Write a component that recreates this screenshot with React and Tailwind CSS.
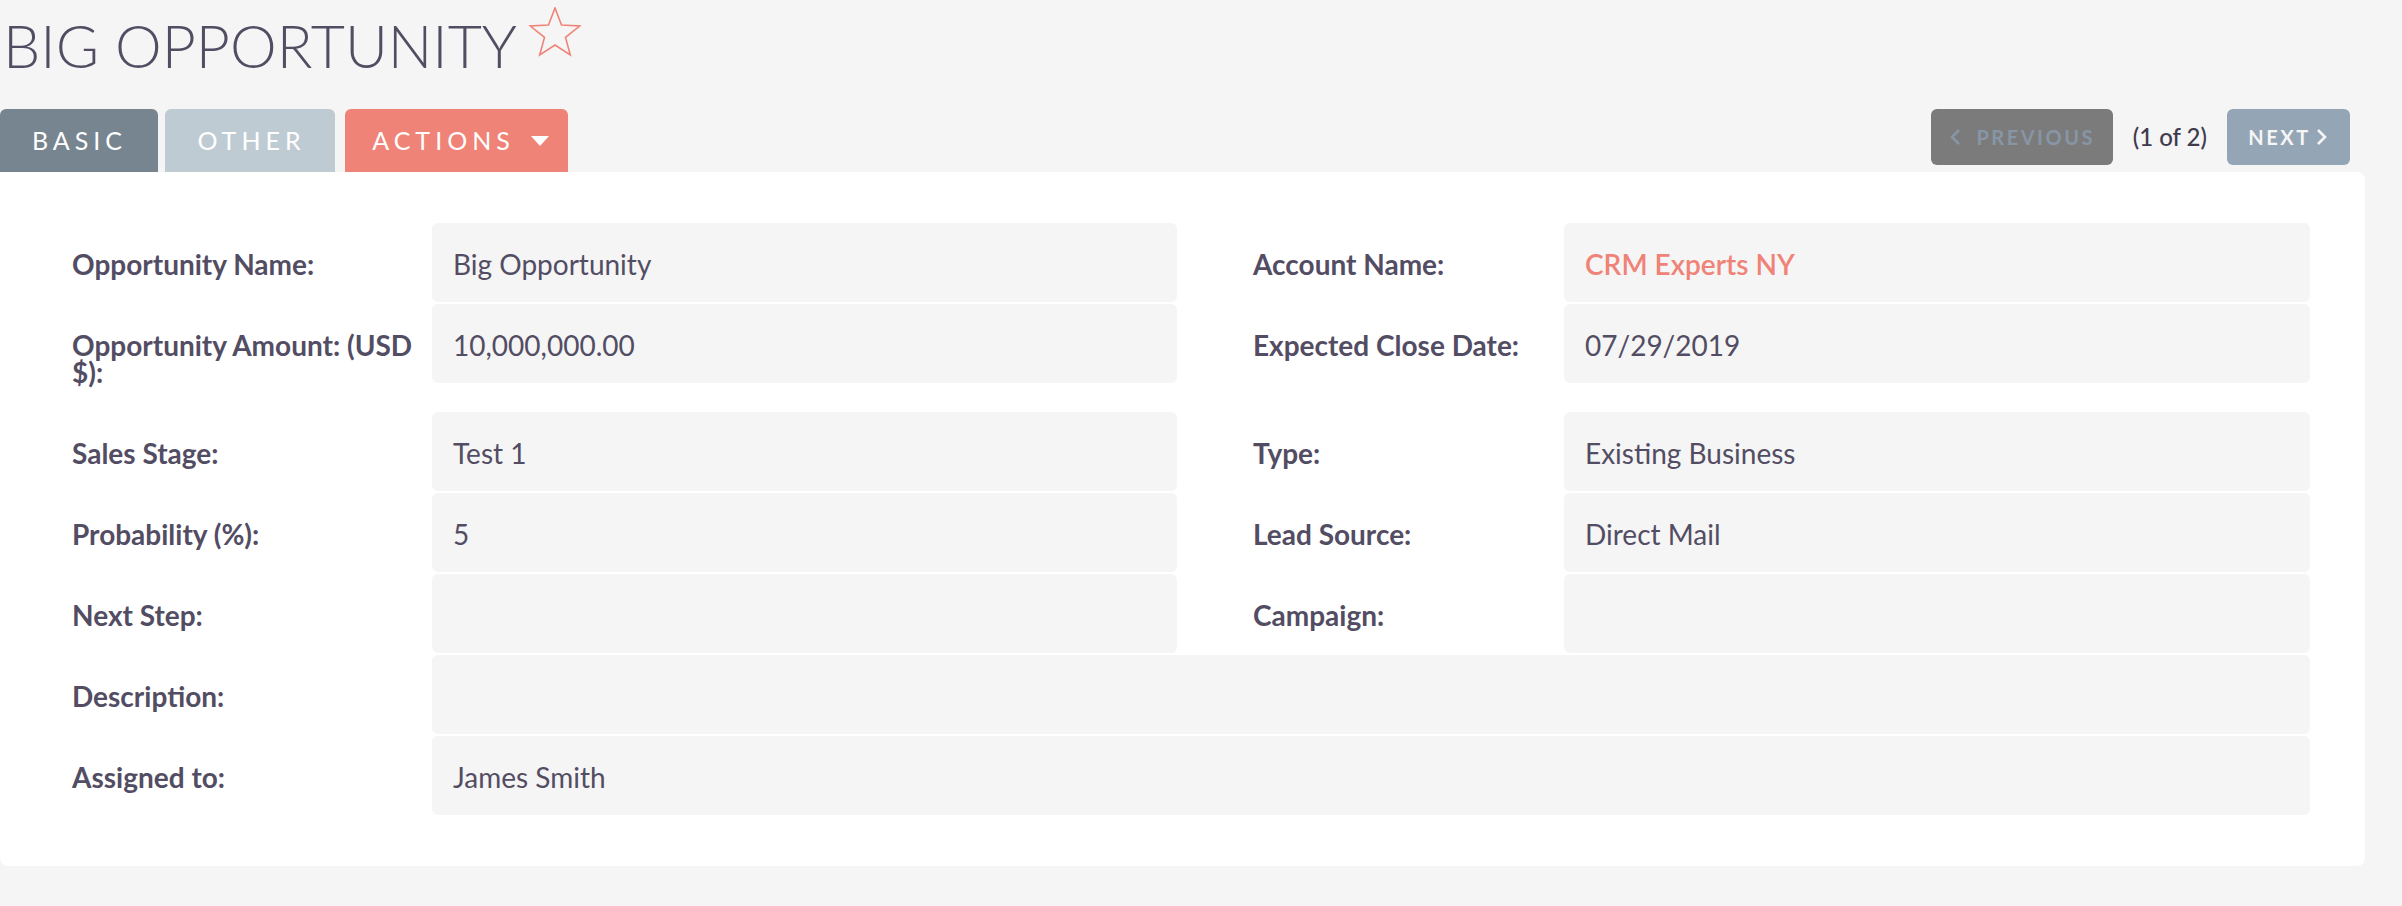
import React from 'react';

const pairRows = [
  { label: 'Opportunity Name:', value: 'Big Opportunity', rightLabel: 'Account Name:', rightValue: 'CRM Experts NY', link: true },
  { label: 'Opportunity Amount: (USD $):', value: '10,000,000.00', rightLabel: 'Expected Close Date:', rightValue: '07/29/2019' },
  { label: 'Sales Stage:', value: 'Test 1', rightLabel: 'Type:', rightValue: 'Existing Business' },
  { label: 'Probability (%):', value: '5', rightLabel: 'Lead Source:', rightValue: 'Direct Mail' },
  { label: 'Next Step:', value: '', rightLabel: 'Campaign:', rightValue: '' },
];

const wideRows = [
  { label: 'Description:', value: '' },
  { label: 'Assigned to:', value: 'James Smith' },
];

const Star = () => (
  <svg width="56" height="52" viewBox="0 0 56 52" className="ml-[10px] mt-[-9px] shrink-0">
    <polygon
      points="28,1 34.5,18.1 52.7,19 38.5,30.4 43.3,48 28,38 12.7,48 17.5,30.4 3.3,19 21.5,18.1"
      fill="none"
      stroke="#f08377"
      strokeWidth="1.6"
      strokeLinejoin="miter"
    />
  </svg>
);

const Label = ({ children, className = '' }) => (
  <div className={`pt-[28px] pb-[24px] pr-[8px] text-[28px] leading-[27px] font-bold text-[#534d64] ${className}`}>
    {children}
  </div>
);

const Value = ({ children, link, className = '' }) => (
  <div className={`h-[79px] rounded-[6px] bg-[#f5f5f5] pl-[21px] pt-[28px] text-[28px] leading-[26px] ${link ? 'text-[#f08377] font-semibold' : 'text-[#534d64]'} ${className}`}>
    {children}
  </div>
);

const App = () => {
  return (
    <div className="min-h-screen w-full bg-[#f5f5f5] font-[family-name:Lato,sans-serif]">
      <div className="flex items-start pl-[3px] pt-[16px]">
        <h1 className="text-[59px] leading-[60px] font-light tracking-[0px] text-[#534d64]">BIG OPPORTUNITY</h1>
        <Star />
      </div>

      <div className="mt-[33px] flex items-start justify-between pr-[52px]">
        <div className="flex items-start">
          <div className="flex h-[63px] w-[158px] items-center justify-center rounded-t-[6px] bg-[#778591] pl-[1px] text-[25px] tracking-[5px] text-white">
            BASIC
          </div>
          <div className="ml-[7px] flex h-[63px] w-[170px] items-center justify-center rounded-t-[6px] bg-[#bfcbd3] pl-[3px] text-[25px] tracking-[5px] text-white">
            OTHER
          </div>
          <div className="ml-[10px] flex h-[63px] w-[223px] items-center justify-center rounded-t-[6px] bg-[#f08377] pl-[8px] text-[25px] tracking-[5px] text-white">
            <span>ACTIONS</span>
            <span className="ml-[16px] h-0 w-0 border-x-[9px] border-t-[10px] border-x-transparent border-t-white" />
          </div>
        </div>

        <div className="flex items-center">
          <div className="flex h-[56px] w-[182px] items-center justify-center rounded-[6px] bg-[#7b7b7b] text-[20px] font-bold tracking-[2.5px] text-[#8796a6]">
            <svg width="14" height="18" viewBox="0 0 14 18" className="mr-[14px]">
              <polyline points="11,2 4,9 11,16" fill="none" stroke="#8796a6" strokeWidth="2.6" />
            </svg>
            <span>PREVIOUS</span>
          </div>
          <span className="mx-[20px] text-[24px] font-medium text-[#3f3b4d]">(1 of 2)</span>
          <div className="flex h-[56px] w-[123px] items-center justify-center rounded-[6px] bg-[#94a5b5] text-[20px] font-bold tracking-[2.5px] text-[#f5f5f5]">
            <span>NEXT</span>
            <svg width="14" height="18" viewBox="0 0 14 18" className="ml-[4px]">
              <polyline points="3,2 10,9 3,16" fill="none" stroke="#f5f5f5" strokeWidth="2.6" />
            </svg>
          </div>
        </div>
      </div>

      <div className="w-[2365px] rounded-b-[8px] rounded-tr-[8px] bg-white pb-[51px] pl-[72px] pt-[51px]">
        {pairRows.map((row) => (
          <div key={row.label} className="mb-[2px] flex items-start">
            <Label className="w-[360px]">{row.label}</Label>
            <Value className="w-[745px]">{row.value}</Value>
            <Label className="w-[387px] pl-[76px]">{row.rightLabel}</Label>
            <Value className="w-[746px]" link={row.link}>{row.rightValue}</Value>
          </div>
        ))}
        {wideRows.map((row) => (
          <div key={row.label} className="mb-[2px] flex items-start last:mb-0">
            <Label className="w-[360px]">{row.label}</Label>
            <Value className="w-[1878px]">{row.value}</Value>
          </div>
        ))}
      </div>
    </div>
  );
};

export default App;
